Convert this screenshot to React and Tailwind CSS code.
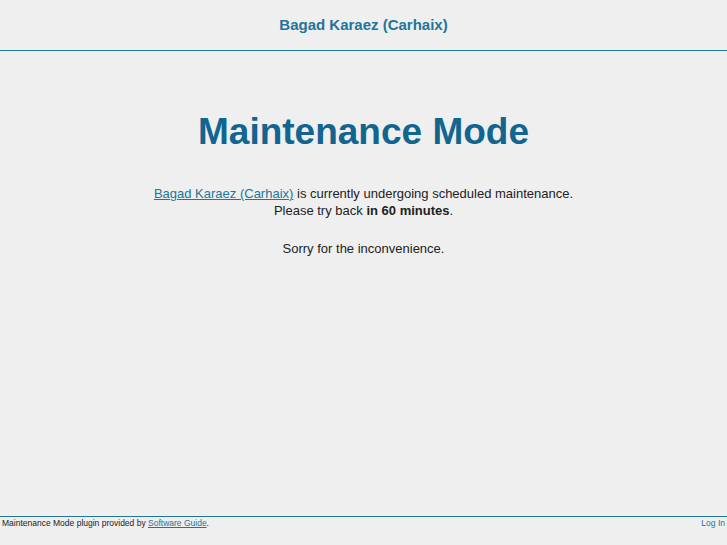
import React from 'react';

const App = () => {
  return (
    <div className="min-h-[545px] flex flex-col bg-[#efefef] font-['Liberation_Sans',Arial,sans-serif] text-[#222]">
      <div className="h-[51px] pt-[1px] flex items-center justify-center border-b border-[#21759b]">
        <a href="#" className="text-[15px] font-bold text-[#21759b] no-underline">
          Bagad Karaez (Carhaix)
        </a>
      </div>

      <div className="flex-1 text-center">
        <h1 className="mt-[57px] text-[37px] leading-[48px] font-bold text-[#11658f]">Maintenance Mode</h1>
        <div className="mt-[29px] text-[13px] leading-[17px]">
          <p>
            <a href="#" className="text-[#21759b] underline">Bagad Karaez (Carhaix)</a> is currently undergoing scheduled maintenance.
            <br />
            Please try back <strong>in 60 minutes</strong>.
          </p>
          <p className="mt-[21px]">Sorry for the inconvenience.</p>
        </div>
      </div>

      <div className="h-[29px] border-t border-[#21759b] flex justify-between px-[2px] pt-[1px] text-[8.5px] leading-[11px]">
        <span>
          Maintenance Mode plugin provided by <a href="#" className="text-[#21759b] underline">Software Guide</a>.
        </span>
        <a href="#" className="text-[#21759b]">Log In</a>
      </div>
    </div>
  );
};

export default App;
